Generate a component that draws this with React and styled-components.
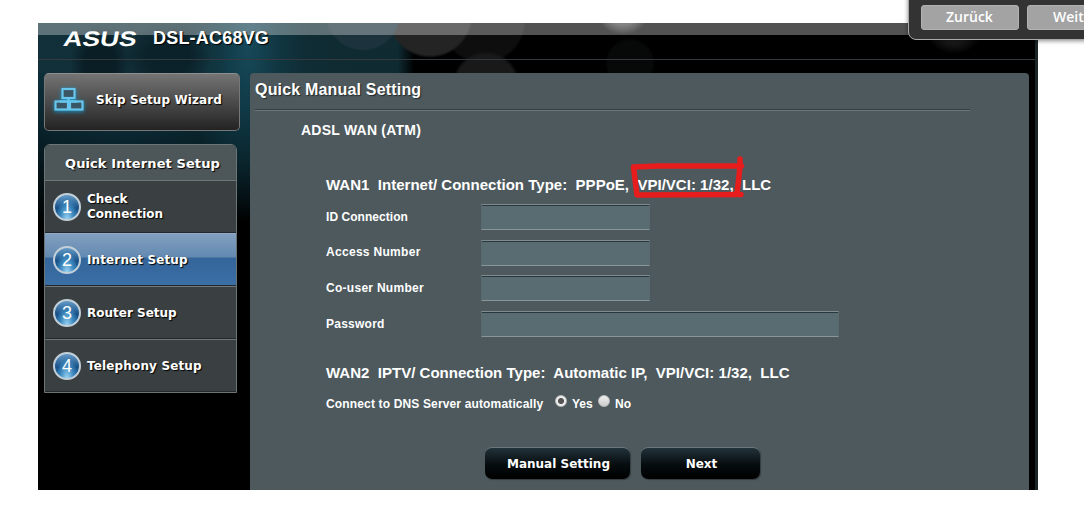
import React from "react";
import styled, { createGlobalStyle } from "styled-components";

const GlobalStyle = createGlobalStyle`
  * {
    box-sizing: border-box;
  }

  body {
    margin: 0;
    background: #fff;
    overflow: hidden;
    font-family: "Liberation Sans", Arial, sans-serif;
  }
`;

const Screen = styled.div`
  position: relative;
  width: 1084px;
  height: 506px;
  padding: 23px 46px 16px 38px;
  overflow: hidden;
`;

const Frame = styled.div`
  width: 1000px;
  height: 467px;
  color: #fff;
  border-right: 3px solid #1b2526;
  background:
    radial-gradient(ellipse 30px 40px at 62px 40px, rgba(4, 18, 24, 0.6) 50%, transparent 100%),
    radial-gradient(ellipse 44px 34px at 130px 34px, rgba(8, 26, 34, 0.6) 50%, transparent 100%),
    radial-gradient(circle at 325px -10px, #1c323c 36px, transparent 38px),
    radial-gradient(circle at 392px -8px, #242424 40px, transparent 43px),
    radial-gradient(circle at 448px 62px, #191919 30px, transparent 34px),
    radial-gradient(circle at 445px -2px, #0e0e0e 40px, transparent 43px),
    radial-gradient(circle at 592px 40px, #070808 22px, transparent 25px),
    radial-gradient(circle at 585px -16px, #484848 18px, transparent 28px),
    radial-gradient(circle at 916px -1px, #1c1c1c 20px, transparent 32px),
    radial-gradient(ellipse 60px 180px at 210px 20px, #17495a 0, rgba(16, 62, 75, 0.6) 50%, transparent 100%),
    linear-gradient(90deg, #12303a, #0f2a31 360px, transparent 376px) 0 0 / 380px 50px no-repeat,
    radial-gradient(ellipse 290px 215px at 90px 0, #12404e 0, #0b2832 50%, transparent 100%),
    #000;
`;

const Header = styled.header`
  display: flex;
  align-items: flex-start;
  height: 37px;
  padding: 4px 0 0 26px;
  border-bottom: 1px solid #343a3d;
  background: linear-gradient(rgba(255, 255, 255, 0.32) 12px, transparent 12px);
`;

const Logo = styled.span`
  width: 89px;
  padding-top: 1px;
  font-size: 21px;
  line-height: 21px;
  font-weight: bold;
  transform: scaleX(1.25) skewX(-8deg);
  transform-origin: 0 50%;
`;

const Model = styled.h1`
  margin: 0;
  font-size: 18px;
  line-height: 22px;
  letter-spacing: 0.2px;
  text-shadow: 1px 1px 1px #000;
`;

const Body = styled.div`
  display: flex;
  align-items: flex-start;
  padding: 13px 6px 0 6px;
`;

const Sidebar = styled.aside`
  width: 206px;
  font-family: "DejaVu Sans", Verdana, sans-serif;
  font-weight: bold;
  font-size: 12px;
  line-height: 15px;
  text-shadow: 1px 1px 1px #000;
`;

const SkipButton = styled.button`
  display: flex;
  align-items: center;
  width: 196px;
  height: 58px;
  margin: 0 0 13px;
  padding: 0 0 4px 9px;
  gap: 12px;
  color: #fff;
  font: inherit;
  text-shadow: inherit;
  white-space: nowrap;
  border: 1px solid #777;
  border-top-color: #8f8f8f;
  border-radius: 5px;
  background: linear-gradient(#747474, #4b4b4b 50%, #232323);
`;

const Menu = styled.nav`
  width: 193px;
  border: 1px solid #6d7476;
  border-radius: 6px 6px 0 0;
  overflow: hidden;
`;

const MenuTitle = styled.div`
  height: 35px;
  padding: 11px 0 0 20px;
  font-size: 13px;
  line-height: 16px;
  letter-spacing: 0.1px;
  white-space: nowrap;
  background: #4d5659;
`;

const MenuItem = styled.div`
  display: flex;
  align-items: center;
  gap: 6px;
  height: 53px;
  padding-left: 8px;
  border-top: 1px solid ${(props) => (props.$active ? "#8fabc9" : "#6f7879")};
  box-shadow: inset 0 -1px #23282a;
  background: ${(props) =>
    props.$active
      ? "linear-gradient(#82a0c0, #6389b1 23px, #34659a 24px, #3b6fa6)"
      : "#3a4042"};
`;

const Step = styled.span`
  display: flex;
  align-items: center;
  justify-content: center;
  flex: none;
  width: 28px;
  height: 28px;
  border: 2px solid #c3cfd8;
  border-radius: 50%;
  font-family: "Liberation Sans", Arial, sans-serif;
  font-size: 18px;
  font-weight: normal;
  text-shadow: none;
  background: radial-gradient(ellipse at 50% 105%, #9fd9f8 0, #3b87bd 40%, transparent 65%),
    linear-gradient(#669bc7, #175087 55%, #2e78af);
`;

const ItemLabel = styled.span`
  letter-spacing: ${(props) => props.$spacing || 0}px;
  white-space: pre-line;
`;

const Panel = styled.main`
  width: 779px;
  height: 417px;
  padding: 7px 0 0 5px;
  border-radius: 4px 4px 0 0;
  background: #4d595d;
`;

const PanelTitle = styled.h2`
  width: 715px;
  height: 31px;
  margin: 0;
  font-size: 16px;
  line-height: 19px;
  letter-spacing: 0.18px;
  text-shadow: 1px 1px 1px #20282b;
  border-bottom: 1px solid #6b777a;
  box-shadow: inset 0 -1px #353f43;
`;

const Mode = styled.h3`
  height: 64px;
  margin: 0;
  padding: 11px 0 0 46px;
  font-size: 14px;
  line-height: 16px;
  letter-spacing: 0.23px;
`;

const Connection = styled.section`
  padding: ${(props) => props.$top || 0}px 0 0 71px;
`;

const ConnectionTitle = styled.h4`
  height: ${(props) => props.$height}px;
  margin: 0;
  font-size: 15px;
  line-height: 20px;
  letter-spacing: 0.02px;
  white-space: pre;
`;

const Field = styled.label`
  display: flex;
  align-items: center;
  height: 26px;
  margin-bottom: 9.7px;
`;

const Caption = styled.span`
  width: 155px;
  padding-bottom: 1px;
  font-size: 12px;
  line-height: 14px;
  font-weight: bold;
  letter-spacing: ${(props) => props.$spacing}px;
`;

const Input = styled.input`
  width: ${(props) => (props.$wide ? 358 : 169)}px;
  height: 26px;
  padding: 0 6px;
  color: #fff;
  border: 1px solid #596a6e;
  border-top-color: #7e8c90;
  border-bottom-color: #88969a;
  border-radius: 0;
  outline: none;
  box-shadow: inset 0 1px #29363b;
  background: #586c72;
`;

const DnsRow = styled.div`
  display: flex;
  align-items: center;
  height: 18px;
  font-size: 12px;
  line-height: 14px;
  font-weight: bold;
`;

const DnsLabel = styled.span`
  width: 228px;
  letter-spacing: 0.15px;
  white-space: nowrap;
`;

const Radio = styled.span`
  width: 12px;
  height: 12px;
  margin: -5px 5px 0 1px;
  border-radius: 50%;
  border: 1px solid #bbb;
  background: ${(props) =>
    props.$checked
      ? "radial-gradient(circle, #555 2.6px, #eee 3.5px)"
      : "linear-gradient(#eee, #ccc)"};
`;

const RadioText = styled.span`
  width: 25px;
`;

const Actions = styled.div`
  display: flex;
  gap: 11px;
  padding: 34px 0 0 230px;
`;

const ActionButton = styled.button`
  width: ${(props) => props.$width}px;
  height: 32px;
  padding: 1px 0 0 2px;
  color: #fff;
  font-family: "DejaVu Sans", Verdana, sans-serif;
  font-size: 12px;
  font-weight: bold;
  border: 0;
  border-top: 1px solid #6a767b;
  border-radius: 7px;
  box-shadow: 1px 1px 1px #343e42;
  background: linear-gradient(#22323a, #060c0e 55%, #000);
`;

const Popup = styled.div`
  position: absolute;
  top: -10px;
  left: 908px;
  display: flex;
  gap: 8px;
  width: 190px;
  height: 50px;
  padding: 14px 0 0 12px;
  border: 1px solid #a9a9a9;
  border-radius: 8px;
  background: #333;
  box-shadow: 0 1px 4px rgba(0, 0, 0, 0.45);
`;

const PopupButton = styled.button`
  flex: none;
  width: 98px;
  height: 25px;
  padding: 0 0 1px ${(props) => props.$indent}px;
  color: #fff;
  font-family: "Open Sans", "Segoe UI", sans-serif;
  font-size: 14px;
  line-height: 20px;
  font-weight: 600;
  text-align: left;
  border: 1px solid #b2b2b2;
  border-radius: 3px;
  background: #a3a3a3;
`;

const Marker = styled.svg`
  position: absolute;
  left: 625px;
  top: 150px;
`;

const NetworkGlyph = styled.svg`
  flex: none;
  filter: drop-shadow(0 1px 2px #1592c8);
`;

const NetworkIcon = () => (
  <NetworkGlyph width="30" height="26" viewBox="0 0 30 26" fill="#3a5563" stroke="#68c6ec" strokeWidth="2.2">
    <rect x="8.500" y="2" width="12" height="9" />
    <path d="M14.5 11v3" />
    <rect x="1.5" y="14.5" width="12.5" height="8" />
    <rect x="16" y="14.5" width="12.5" height="8" />
    <path d="M6 14.500h17" />
  </NetworkGlyph>
);

const steps = [
  { label: "Check\nConnection" },
  { label: "Internet Setup", spacing: 0.12, active: true },
  { label: "Router Setup" },
  { label: "Telephony Setup", spacing: 0.15 },
];

const fields = [
  { label: "ID Connection", spacing: 0.05 },
  { label: "Access Number", spacing: 0.3 },
  { label: "Co-user Number", spacing: 0.28 },
  { label: "Password", spacing: 0.25, wide: true },
];

const App = () => (
  <Screen>
    <GlobalStyle />
    <Frame>
      <Header>
        <Logo>ASUS</Logo>
        <Model>DSL-AC68VG</Model>
      </Header>
      <Body>
        <Sidebar>
          <SkipButton>
            <NetworkIcon />
            <ItemLabel $spacing={0.1}>Skip Setup Wizard</ItemLabel>
          </SkipButton>
          <Menu>
            <MenuTitle>Quick Internet Setup</MenuTitle>
            {steps.map((step, i) => (
              <MenuItem key={i} $active={step.active}>
                <Step>{i + 1}</Step>
                <ItemLabel $spacing={step.spacing}>{step.label}</ItemLabel>
              </MenuItem>
            ))}
          </Menu>
        </Sidebar>
        <Panel>
          <PanelTitle>Quick Manual Setting</PanelTitle>
          <Mode>ADSL WAN (ATM)</Mode>
          <Connection>
            <ConnectionTitle $height={29}>
              {"WAN1  Internet/ Connection Type:  PPPoE,  VPI/VCI: 1/32,  LLC"}
            </ConnectionTitle>
            {fields.map((field) => (
              <Field key={field.label}>
                <Caption $spacing={field.spacing}>{field.label}</Caption>
                <Input $wide={field.wide} />
              </Field>
            ))}
          </Connection>
          <Connection $top={16}>
            <ConnectionTitle $height={32}>
              {"WAN2  IPTV/ Connection Type:  Automatic IP,  VPI/VCI: 1/32,  LLC"}
            </ConnectionTitle>
            <DnsRow>
              <DnsLabel>Connect to DNS Server automatically</DnsLabel>
              <Radio $checked />
              <RadioText>Yes</RadioText>
              <Radio />
              <RadioText>No</RadioText>
            </DnsRow>
          </Connection>
          <Actions>
            <ActionButton $width={145}>Manual Setting</ActionButton>
            <ActionButton $width={119}>Next</ActionButton>
          </Actions>
        </Panel>
      </Body>
    </Frame>
    <Popup>
      <PopupButton $indent={24}>Zurück</PopupButton>
      <PopupButton $indent={25}>Weit</PopupButton>
    </Popup>
    <Marker width="125" height="52" fill="none" stroke="#e71c1c" strokeWidth="5.5" strokeLinecap="round" strokeLinejoin="round">
      <path d="M8.5 17l25-1 83 0M8.5 17l3.5 28 104-.5M115 9v8l-3 27" />
    </Marker>
  </Screen>
);

export default App;
